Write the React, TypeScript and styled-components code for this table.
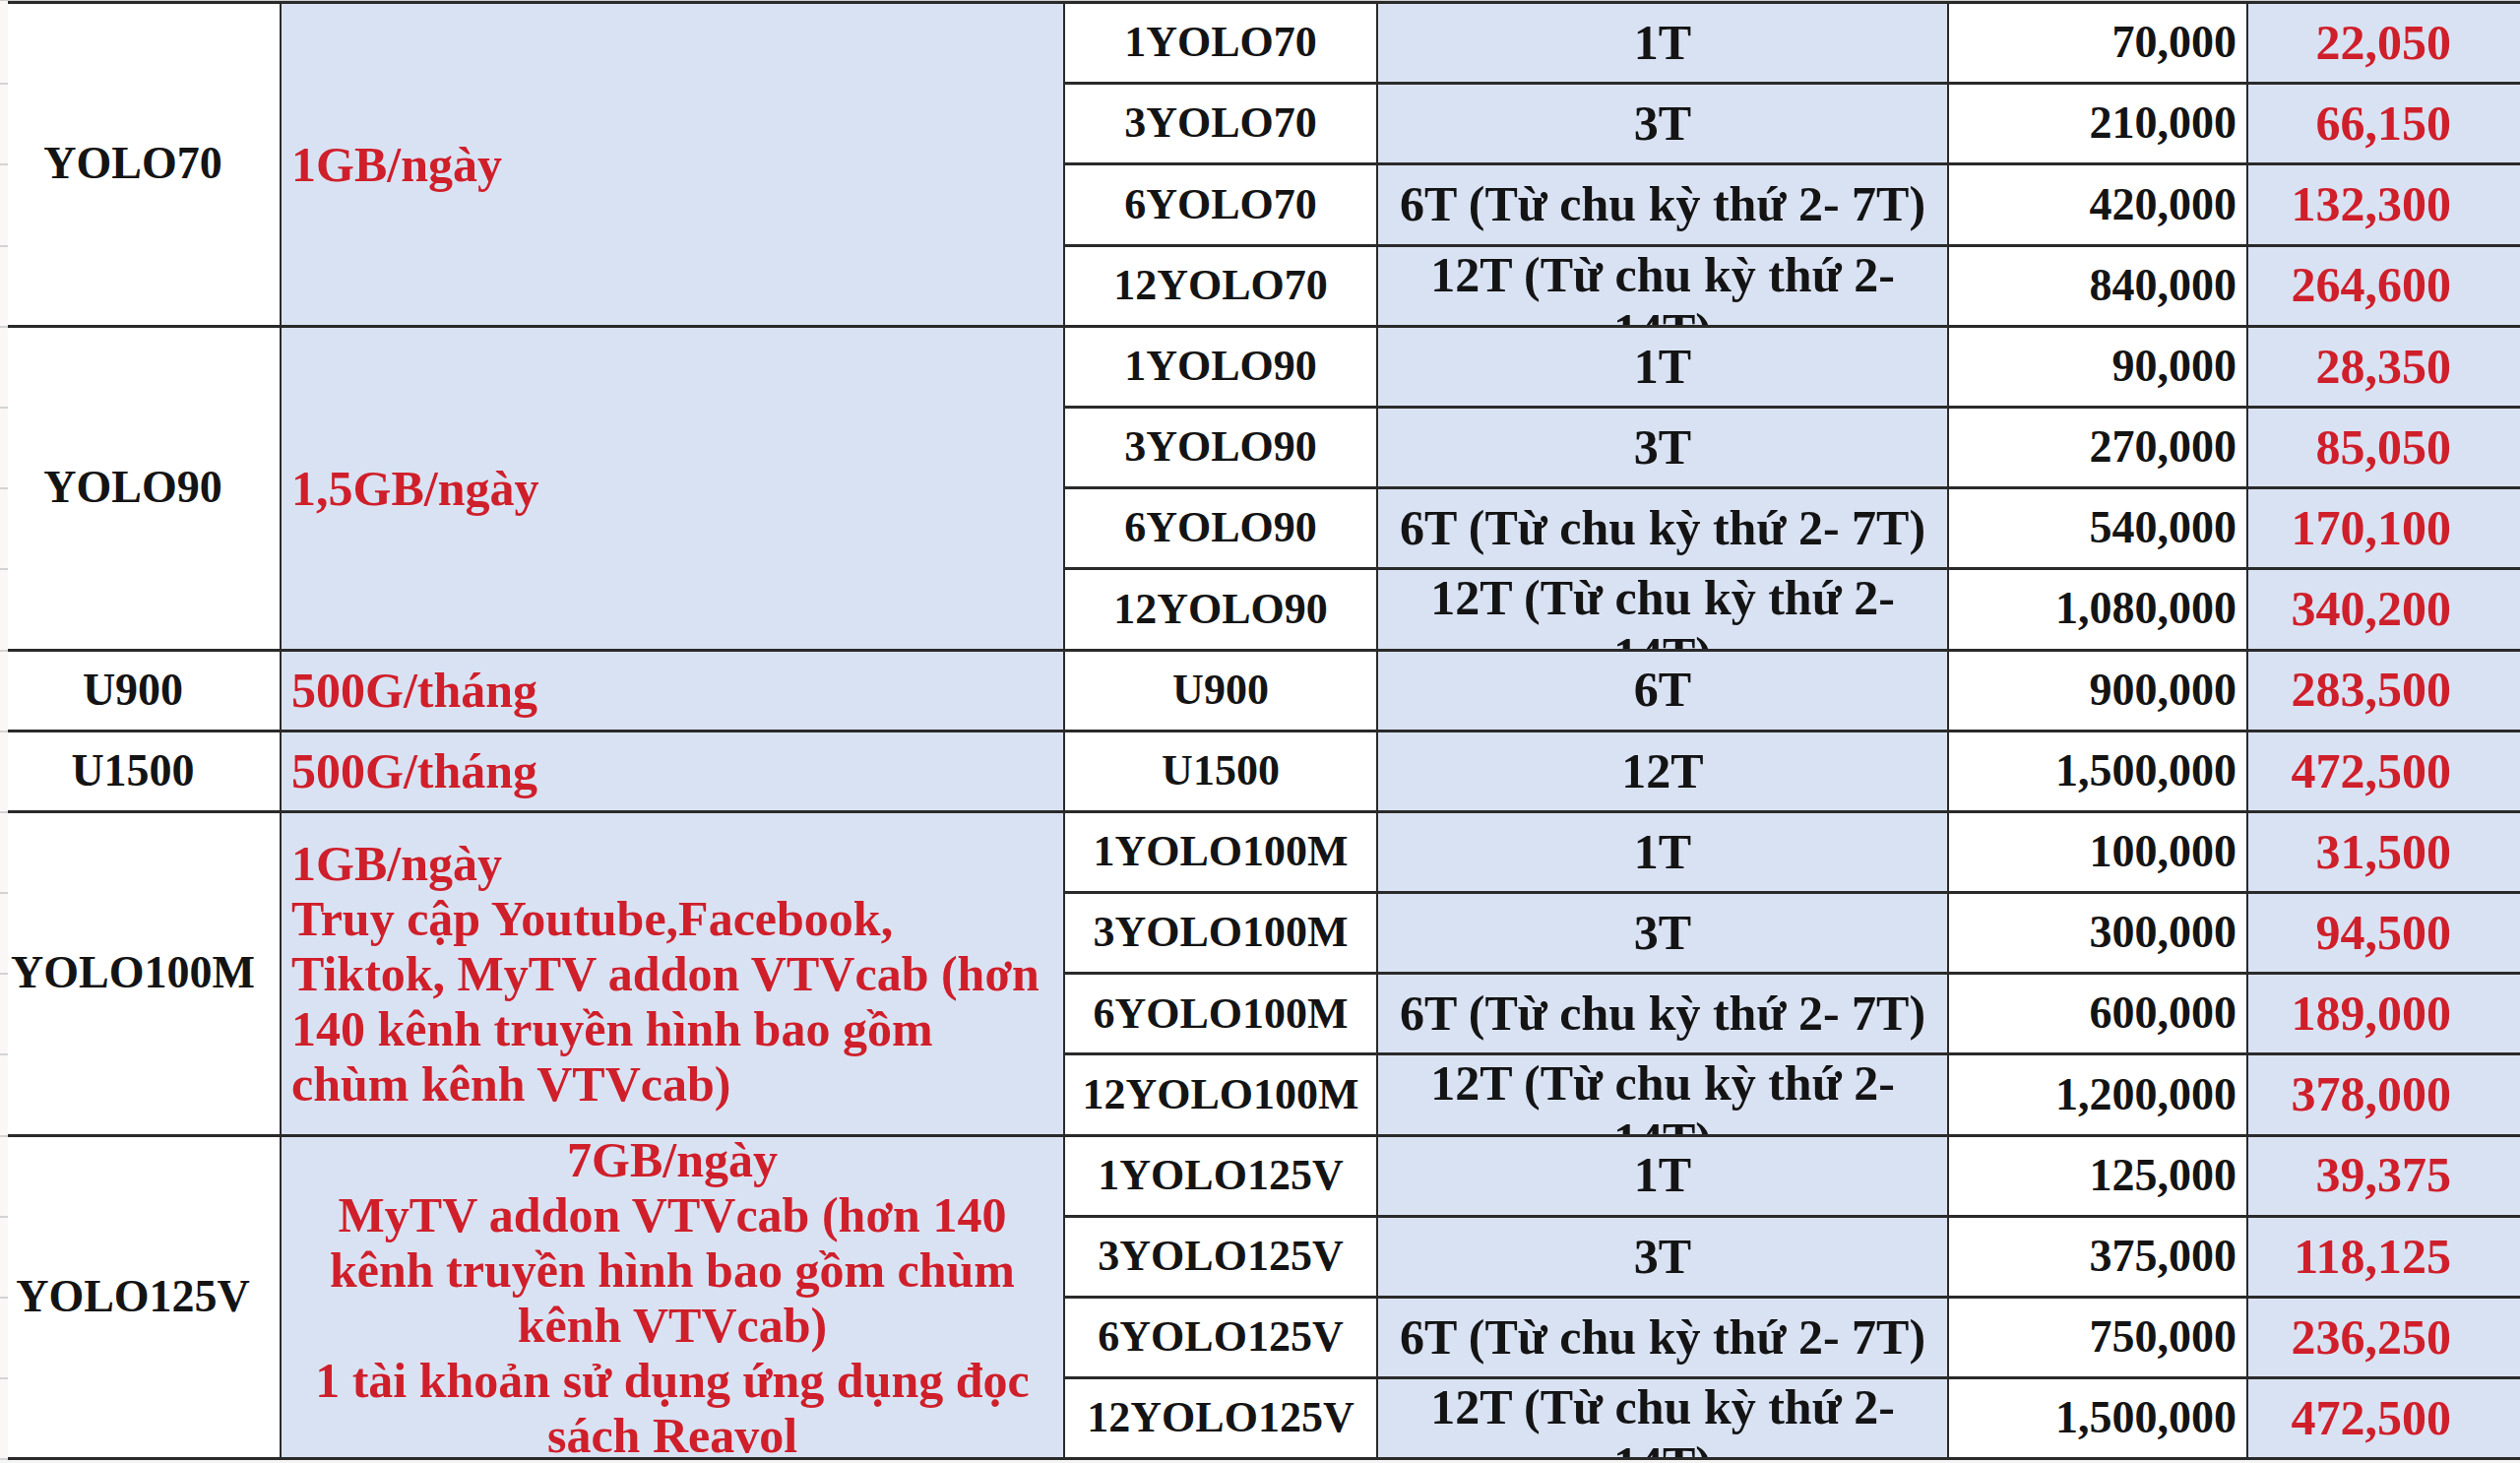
import React from "react";
import styled, { createGlobalStyle } from "styled-components";

type Plan = { code: string; term: string; price: string; sale: string };
type Group = {
  name: string;
  info: string[];
  infoAlign: "left" | "center";
  plans: Plan[];
};

const LONG_6 = "6T (Từ chu kỳ thứ 2- 7T)";
const LONG_12 = "12T (Từ chu kỳ thứ 2- 14T)";

// the four-period packs all share the same terms
const series = (base: string, prices: string[], sales: string[]): Plan[] =>
  ["1", "3", "6", "12"].map((n, i) => ({
    code: n + base,
    term: ["1T", "3T", LONG_6, LONG_12][i],
    price: prices[i],
    sale: sales[i],
  }));

const groups: Group[] = [
  {
    name: "YOLO70",
    info: ["1GB/ngày"],
    infoAlign: "left",
    plans: series(
      "YOLO70",
      ["70,000", "210,000", "420,000", "840,000"],
      ["22,050", "66,150", "132,300", "264,600"]
    ),
  },
  {
    name: "YOLO90",
    info: ["1,5GB/ngày"],
    infoAlign: "left",
    plans: series(
      "YOLO90",
      ["90,000", "270,000", "540,000", "1,080,000"],
      ["28,350", "85,050", "170,100", "340,200"]
    ),
  },
  {
    name: "U900",
    info: ["500G/tháng"],
    infoAlign: "left",
    plans: [{ code: "U900", term: "6T", price: "900,000", sale: "283,500" }],
  },
  {
    name: "U1500",
    info: ["500G/tháng"],
    infoAlign: "left",
    plans: [{ code: "U1500", term: "12T", price: "1,500,000", sale: "472,500" }],
  },
  {
    name: "YOLO100M",
    info: [
      "1GB/ngày",
      "Truy cập Youtube,Facebook,",
      "Tiktok, MyTV addon VTVcab (hơn",
      "140 kênh truyền hình bao gồm",
      "chùm kênh VTVcab)",
    ],
    infoAlign: "left",
    plans: series(
      "YOLO100M",
      ["100,000", "300,000", "600,000", "1,200,000"],
      ["31,500", "94,500", "189,000", "378,000"]
    ),
  },
  {
    name: "YOLO125V",
    info: [
      "7GB/ngày",
      "MyTV addon VTVcab (hơn 140",
      "kênh truyền hình bao gồm chùm",
      "kênh VTVcab)",
      "1 tài khoản sử dụng ứng dụng đọc",
      "sách Reavol",
    ],
    infoAlign: "center",
    plans: series(
      "YOLO125V",
      ["125,000", "375,000", "750,000", "1,500,000"],
      ["39,375", "118,125", "236,250", "472,500"]
    ),
  },
];

const rowCount = groups.reduce((n, g) => n + g.plans.length, 0);

const GlobalStyle = createGlobalStyle`
  html, body {
    margin: 0;
    padding: 0;
    background: #ffffff;
    overflow: hidden;
  }
  body {
    font-family: "Liberation Serif", "Times New Roman", serif;
  }
`;

const Page = styled.div`
  display: flex;
  align-items: flex-start;
  width: 2560px;
  height: 1486px;
  box-sizing: border-box;
  border-top: 1px solid #cfcfcf;
  background: #f4f4f4;
  overflow: hidden;
`;

const Strip = styled.div`
  flex: none;
  width: 8px;
  padding-top: 3px;
  display: flex;
  flex-direction: column;
  background: #fbf7f6;
`;

const Tick = styled.div`
  flex: none;
  height: 82.2px;
  box-sizing: border-box;
  border-bottom: 2px solid #d3d3d3;
`;

const Sheet = styled.div`
  flex: 1;
  display: grid;
  grid-template-columns: 276px 794px 316px 578px 302px 1fr;
  grid-template-rows: repeat(${rowCount}, 79.2px);
  gap: 3px 2px;
  padding: 3px 0;
  background: #2a2a2a;
`;

const Cell = styled.div<{ $span?: number }>`
  grid-row: span ${(p) => p.$span ?? 1};
  display: flex;
  align-items: safe center;
  justify-content: center;
  text-align: center;
  overflow: hidden;
  min-width: 0;
  background: #ffffff;
  color: #141414;
  font-size: 50px;
  font-weight: 700;
  line-height: 1.15;
`;

const NameCell = styled(Cell)`
  padding-right: 22px;
  font-size: 46px;
  white-space: nowrap;
`;

const InfoCell = styled(Cell)<{ $align: "left" | "center" }>`
  align-items: center;
  justify-content: ${(p) => (p.$align === "left" ? "flex-start" : "center")};
  text-align: ${(p) => p.$align};
  padding-left: ${(p) => (p.$align === "left" ? "10px" : "0")};
  background: #d9e2f3;
  color: #cf1f2a;
  line-height: 1.12;
`;

const InfoLine = styled.span`
  display: block;
  white-space: nowrap;
`;

const CodeCell = styled(Cell)`
  font-size: 44px;
  white-space: nowrap;
`;

const TermCell = styled(Cell)`
  background: #d9e2f3;
`;

const PriceCell = styled(Cell)`
  justify-content: flex-end;
  padding-right: 10px;
  font-size: 46px;
  white-space: nowrap;
`;

const SaleCell = styled(Cell)`
  justify-content: flex-end;
  padding-right: 70px;
  background: #d9e2f3;
  color: #cf1f2a;
  white-space: nowrap;
`;

export default function App() {
  return (
    <>
      <GlobalStyle />
      <Page>
        <Strip>
          {Array.from({ length: rowCount }, (_, i) => (
            <Tick key={i} />
          ))}
        </Strip>
        <Sheet>
          {groups.map((g) =>
            g.plans.map((p, i) => (
              <React.Fragment key={p.code}>
                {i === 0 && (
                  <>
                    <NameCell $span={g.plans.length}>{g.name}</NameCell>
                    <InfoCell $span={g.plans.length} $align={g.infoAlign}>
                      <div>
                        {g.info.map((line) => (
                          <InfoLine key={line}>{line}</InfoLine>
                        ))}
                      </div>
                    </InfoCell>
                  </>
                )}
                <CodeCell>{p.code}</CodeCell>
                <TermCell>
                  <span>{p.term}</span>
                </TermCell>
                <PriceCell>{p.price}</PriceCell>
                <SaleCell>{p.sale}</SaleCell>
              </React.Fragment>
            ))
          )}
        </Sheet>
      </Page>
    </>
  );
}
